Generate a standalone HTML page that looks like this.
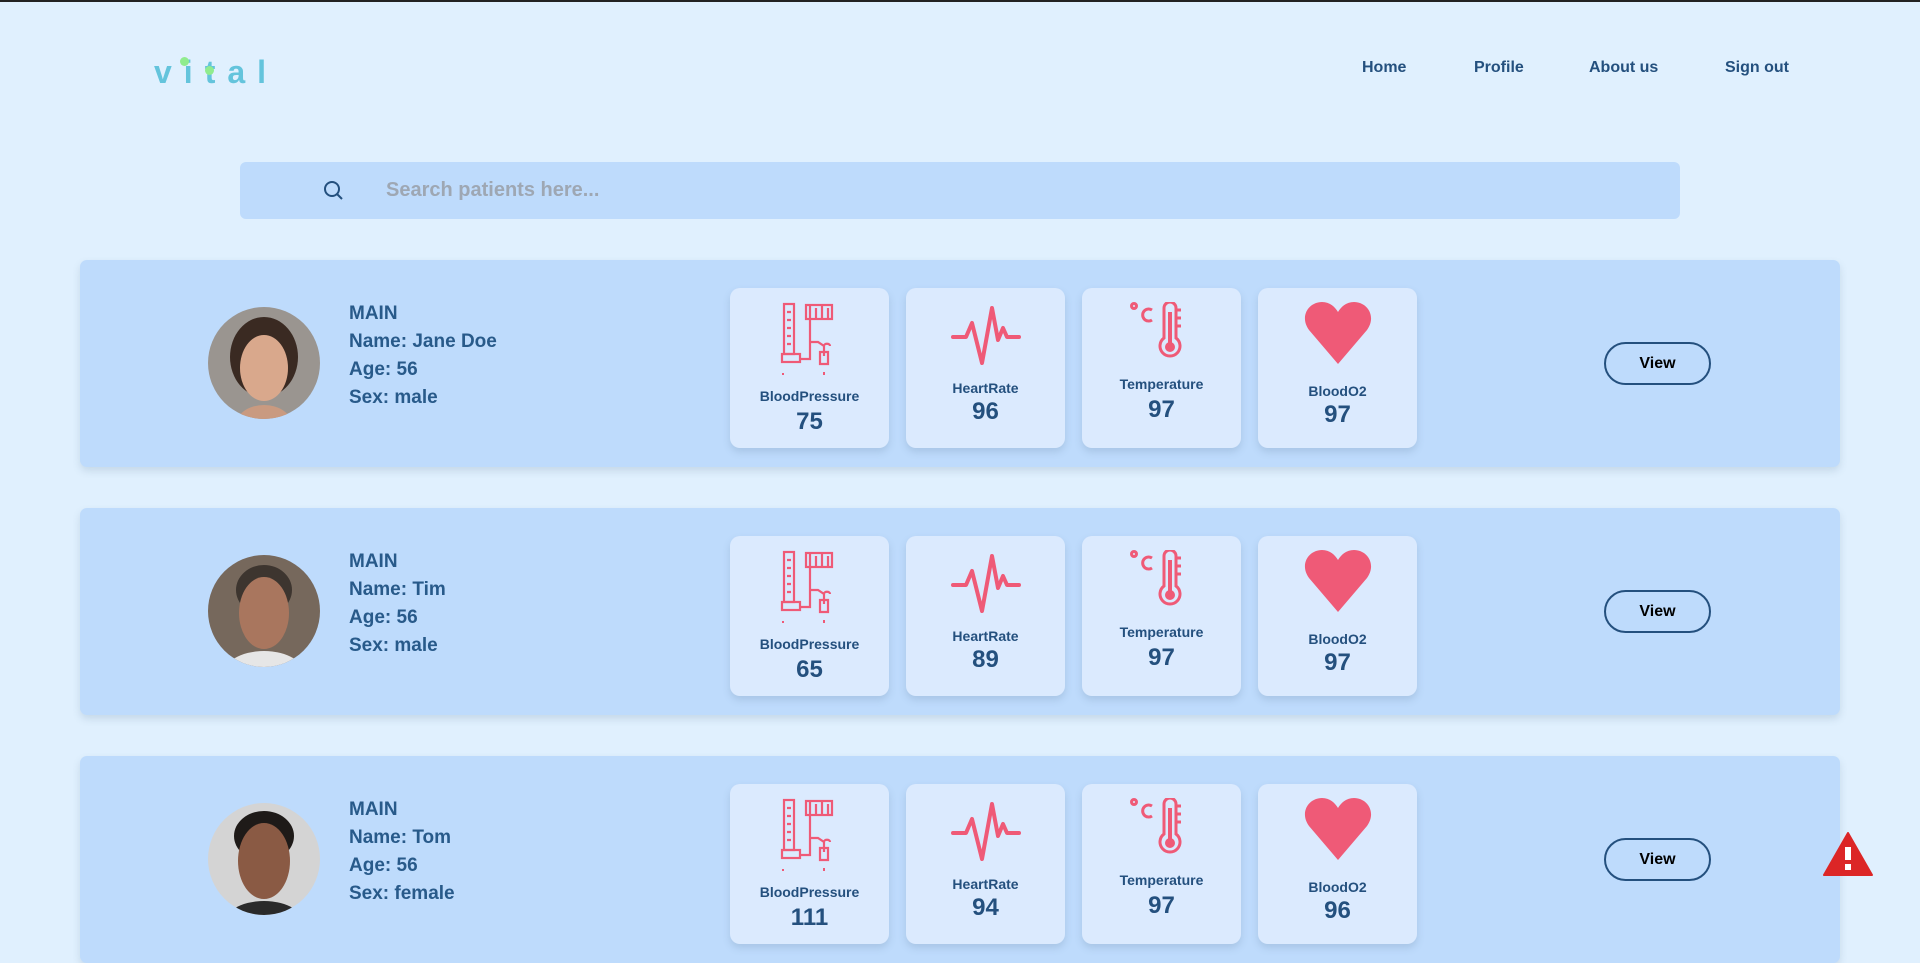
<!DOCTYPE html>
<html><head><meta charset="utf-8"><style>
*{margin:0;padding:0;box-sizing:border-box}
body{width:1920px;height:922px;overflow:hidden;background:#e0f0fe;font-family:"Liberation Sans",sans-serif;position:relative;border-top:2px solid #222}
.logo{position:absolute;left:154px;top:52px;font-size:32px;font-weight:bold;color:#64c4dc;letter-spacing:12px}
.dot{position:absolute;width:9px;height:9px;border-radius:50%;background:#90ec8e}
.nav a{position:absolute;top:57px;font-size:16px;font-weight:bold;color:#24507e;text-decoration:none}
.search{position:absolute;left:240px;top:160px;width:1440px;height:57px;background:#bedbfc;border-radius:6px}
.search span{position:absolute;left:146px;top:17px;font-size:20px;font-weight:bold;color:#9ea7b3}
.card{position:absolute;left:80px;width:1760px;height:207px;background:#bedbfc;border-radius:7px;box-shadow:0 4px 8px rgba(80,110,140,.18)}
.av{position:absolute;left:128px;top:47px;width:112px;height:112px;border-radius:50%;overflow:hidden}
.av i{position:absolute;display:block;border-radius:50%}
.info{position:absolute;left:269px;top:40px;font-size:19px;font-weight:bold;color:#285a8a;line-height:28px}
.tile{position:absolute;top:28px;width:159px;height:160px;background:#dbeafe;border-radius:10px;box-shadow:0 4px 8px rgba(80,110,140,.2);text-align:center;color:#24507e}
.tile svg{position:absolute;left:0;right:0;margin:auto}
.lbl{position:absolute;left:0;right:0;font-size:14px;font-weight:bold}
.val{position:absolute;left:0;right:0;font-size:24px;font-weight:bold}
.btn{position:absolute;left:1524px;top:82px;width:107px;height:43px;border:2px solid #24507e;border-radius:22px;text-align:center;line-height:39px;font-size:16px;font-weight:bold;color:#000}
</style></head><body>
<div class="logo">vital</div>
<div class="dot" style="left:180px;top:55px"></div>
<div class="dot" style="left:205px;top:64px"></div>
<div class="nav"><a style="left:1362px">Home</a><a style="left:1474px">Profile</a><a style="left:1589px">About us</a><a style="left:1725px">Sign out</a></div>
<div class="search"><svg style="position:absolute;left:83px;top:18px" width="22" height="22" viewBox="0 0 22 22"><circle cx="9" cy="9" r="7" fill="none" stroke="#24507e" stroke-width="2"/><path d="M14 14l5 5" stroke="#24507e" stroke-width="2"/></svg><span>Search patients here...</span></div>

<div class="card" style="top:258px">
<div class="av" style="background:#9a9590"><i style="left:22px;top:10px;width:68px;height:80px;background:#3a2a22"></i><i style="left:28px;top:98px;width:56px;height:40px;background:#c99a80"></i><i style="left:32px;top:28px;width:48px;height:66px;background:#d9a88c"></i></div>
<div class="info">MAIN<br>Name: Jane Doe<br>Age: 56<br>Sex: male</div>
<div class="tile" style="left:650px"><svg style="top:14px" width="60" height="75" viewBox="0 0 60 75"><g fill="none" stroke="#ef5a77" stroke-width="2.2"><rect x="4" y="2" width="10" height="50"/><rect x="2" y="52" width="18" height="8"/><rect x="26" y="3" width="26" height="14"/><path d="M30 3v14M36 6v11M42 3v14M48 6v11M30 17v40H20M30 40h8l6 4v10M44 44c0-3 6-3 6 0M40 50h8v12h-8zM7 10h4M7 18h4M7 26h4M7 34h4M7 42h4"/></g><path d="M2 72h2M44 70v3" stroke="#ef5a77" stroke-width="2"/></svg><div class="lbl" style="top:100px">BloodPressure</div><div class="val" style="top:120px">75</div></div>
<div class="tile" style="left:826px"><svg style="top:16px" width="72" height="62" viewBox="0 0 72 62"><path d="M3 33h13l6-14 10 40 10-55 6 32 5-12 4 9h12" fill="none" stroke="#ef5a77" stroke-width="4" stroke-linejoin="round" stroke-linecap="round"/></svg><div class="lbl" style="top:92px">HeartRate</div><div class="val" style="top:110px">96</div></div>
<div class="tile" style="left:1002px"><svg style="top:14px" width="64" height="58" viewBox="0 0 64 58"><g fill="none" stroke="#ef5a77" stroke-width="3"><circle cx="4" cy="4" r="2.5"/><path d="M22 8a6 6 0 1 0 0 10"/><path d="M34 6a6 6 0 0 1 12 0v30a10 10 0 1 1-12 0zM46 8h5M46 16h5M46 24h5"/></g><path d="M40 10v34" stroke="#ef5a77" stroke-width="4"/><circle cx="40" cy="45" r="5" fill="#ef5a77"/></svg><div class="lbl" style="top:88px">Temperature</div><div class="val" style="top:108px">97</div></div>
<div class="tile" style="left:1178px"><svg style="top:14px" width="70" height="62" viewBox="0 0 70 62"><path d="M35 62L6 28C-4 14 6 0 19 0c8 0 13 5 16 10 3-5 8-10 16-10 13 0 23 14 13 28z" fill="#ef5a77"/></svg><div class="lbl" style="top:95px">BloodO2</div><div class="val" style="top:113px">97</div></div>
<div class="btn">View</div>
</div>

<div class="card" style="top:506px">
<div class="av" style="background:#76685c"><i style="left:28px;top:10px;width:56px;height:50px;background:#3d352f"></i><i style="left:14px;top:96px;width:84px;height:50px;background:#e6e6e6"></i><i style="left:31px;top:22px;width:50px;height:72px;background:#a9765e"></i></div>
<div class="info">MAIN<br>Name: Tim<br>Age: 56<br>Sex: male</div>
<div class="tile" style="left:650px"><svg style="top:14px" width="60" height="75" viewBox="0 0 60 75"><g fill="none" stroke="#ef5a77" stroke-width="2.2"><rect x="4" y="2" width="10" height="50"/><rect x="2" y="52" width="18" height="8"/><rect x="26" y="3" width="26" height="14"/><path d="M30 3v14M36 6v11M42 3v14M48 6v11M30 17v40H20M30 40h8l6 4v10M44 44c0-3 6-3 6 0M40 50h8v12h-8zM7 10h4M7 18h4M7 26h4M7 34h4M7 42h4"/></g><path d="M2 72h2M44 70v3" stroke="#ef5a77" stroke-width="2"/></svg><div class="lbl" style="top:100px">BloodPressure</div><div class="val" style="top:120px">65</div></div>
<div class="tile" style="left:826px"><svg style="top:16px" width="72" height="62" viewBox="0 0 72 62"><path d="M3 33h13l6-14 10 40 10-55 6 32 5-12 4 9h12" fill="none" stroke="#ef5a77" stroke-width="4" stroke-linejoin="round" stroke-linecap="round"/></svg><div class="lbl" style="top:92px">HeartRate</div><div class="val" style="top:110px">89</div></div>
<div class="tile" style="left:1002px"><svg style="top:14px" width="64" height="58" viewBox="0 0 64 58"><g fill="none" stroke="#ef5a77" stroke-width="3"><circle cx="4" cy="4" r="2.5"/><path d="M22 8a6 6 0 1 0 0 10"/><path d="M34 6a6 6 0 0 1 12 0v30a10 10 0 1 1-12 0zM46 8h5M46 16h5M46 24h5"/></g><path d="M40 10v34" stroke="#ef5a77" stroke-width="4"/><circle cx="40" cy="45" r="5" fill="#ef5a77"/></svg><div class="lbl" style="top:88px">Temperature</div><div class="val" style="top:108px">97</div></div>
<div class="tile" style="left:1178px"><svg style="top:14px" width="70" height="62" viewBox="0 0 70 62"><path d="M35 62L6 28C-4 14 6 0 19 0c8 0 13 5 16 10 3-5 8-10 16-10 13 0 23 14 13 28z" fill="#ef5a77"/></svg><div class="lbl" style="top:95px">BloodO2</div><div class="val" style="top:113px">97</div></div>
<div class="btn">View</div>
</div>

<div class="card" style="top:754px">
<div class="av" style="background:#d4d4d4"><i style="left:26px;top:8px;width:60px;height:50px;background:#1e1a18"></i><i style="left:14px;top:98px;width:84px;height:50px;background:#2a2a2a"></i><i style="left:30px;top:20px;width:52px;height:76px;background:#8a5a44"></i></div>
<div class="info">MAIN<br>Name: Tom<br>Age: 56<br>Sex: female</div>
<div class="tile" style="left:650px"><svg style="top:14px" width="60" height="75" viewBox="0 0 60 75"><g fill="none" stroke="#ef5a77" stroke-width="2.2"><rect x="4" y="2" width="10" height="50"/><rect x="2" y="52" width="18" height="8"/><rect x="26" y="3" width="26" height="14"/><path d="M30 3v14M36 6v11M42 3v14M48 6v11M30 17v40H20M30 40h8l6 4v10M44 44c0-3 6-3 6 0M40 50h8v12h-8zM7 10h4M7 18h4M7 26h4M7 34h4M7 42h4"/></g><path d="M2 72h2M44 70v3" stroke="#ef5a77" stroke-width="2"/></svg><div class="lbl" style="top:100px">BloodPressure</div><div class="val" style="top:120px">111</div></div>
<div class="tile" style="left:826px"><svg style="top:16px" width="72" height="62" viewBox="0 0 72 62"><path d="M3 33h13l6-14 10 40 10-55 6 32 5-12 4 9h12" fill="none" stroke="#ef5a77" stroke-width="4" stroke-linejoin="round" stroke-linecap="round"/></svg><div class="lbl" style="top:92px">HeartRate</div><div class="val" style="top:110px">94</div></div>
<div class="tile" style="left:1002px"><svg style="top:14px" width="64" height="58" viewBox="0 0 64 58"><g fill="none" stroke="#ef5a77" stroke-width="3"><circle cx="4" cy="4" r="2.5"/><path d="M22 8a6 6 0 1 0 0 10"/><path d="M34 6a6 6 0 0 1 12 0v30a10 10 0 1 1-12 0zM46 8h5M46 16h5M46 24h5"/></g><path d="M40 10v34" stroke="#ef5a77" stroke-width="4"/><circle cx="40" cy="45" r="5" fill="#ef5a77"/></svg><div class="lbl" style="top:88px">Temperature</div><div class="val" style="top:108px">97</div></div>
<div class="tile" style="left:1178px"><svg style="top:14px" width="70" height="62" viewBox="0 0 70 62"><path d="M35 62L6 28C-4 14 6 0 19 0c8 0 13 5 16 10 3-5 8-10 16-10 13 0 23 14 13 28z" fill="#ef5a77"/></svg><div class="lbl" style="top:95px">BloodO2</div><div class="val" style="top:113px">96</div></div>
<div class="btn">View</div>
</div>

<svg style="position:absolute;left:1823px;top:829px" width="50" height="46" viewBox="0 0 50 46"><path d="M25 2L1 44h48z" fill="#dc2626" stroke="#dc2626" stroke-width="2" stroke-linejoin="round"/><rect x="22" y="16" width="6" height="13" fill="#fff"/><rect x="22" y="33" width="6" height="6" fill="#fff"/></svg>
</body></html>
